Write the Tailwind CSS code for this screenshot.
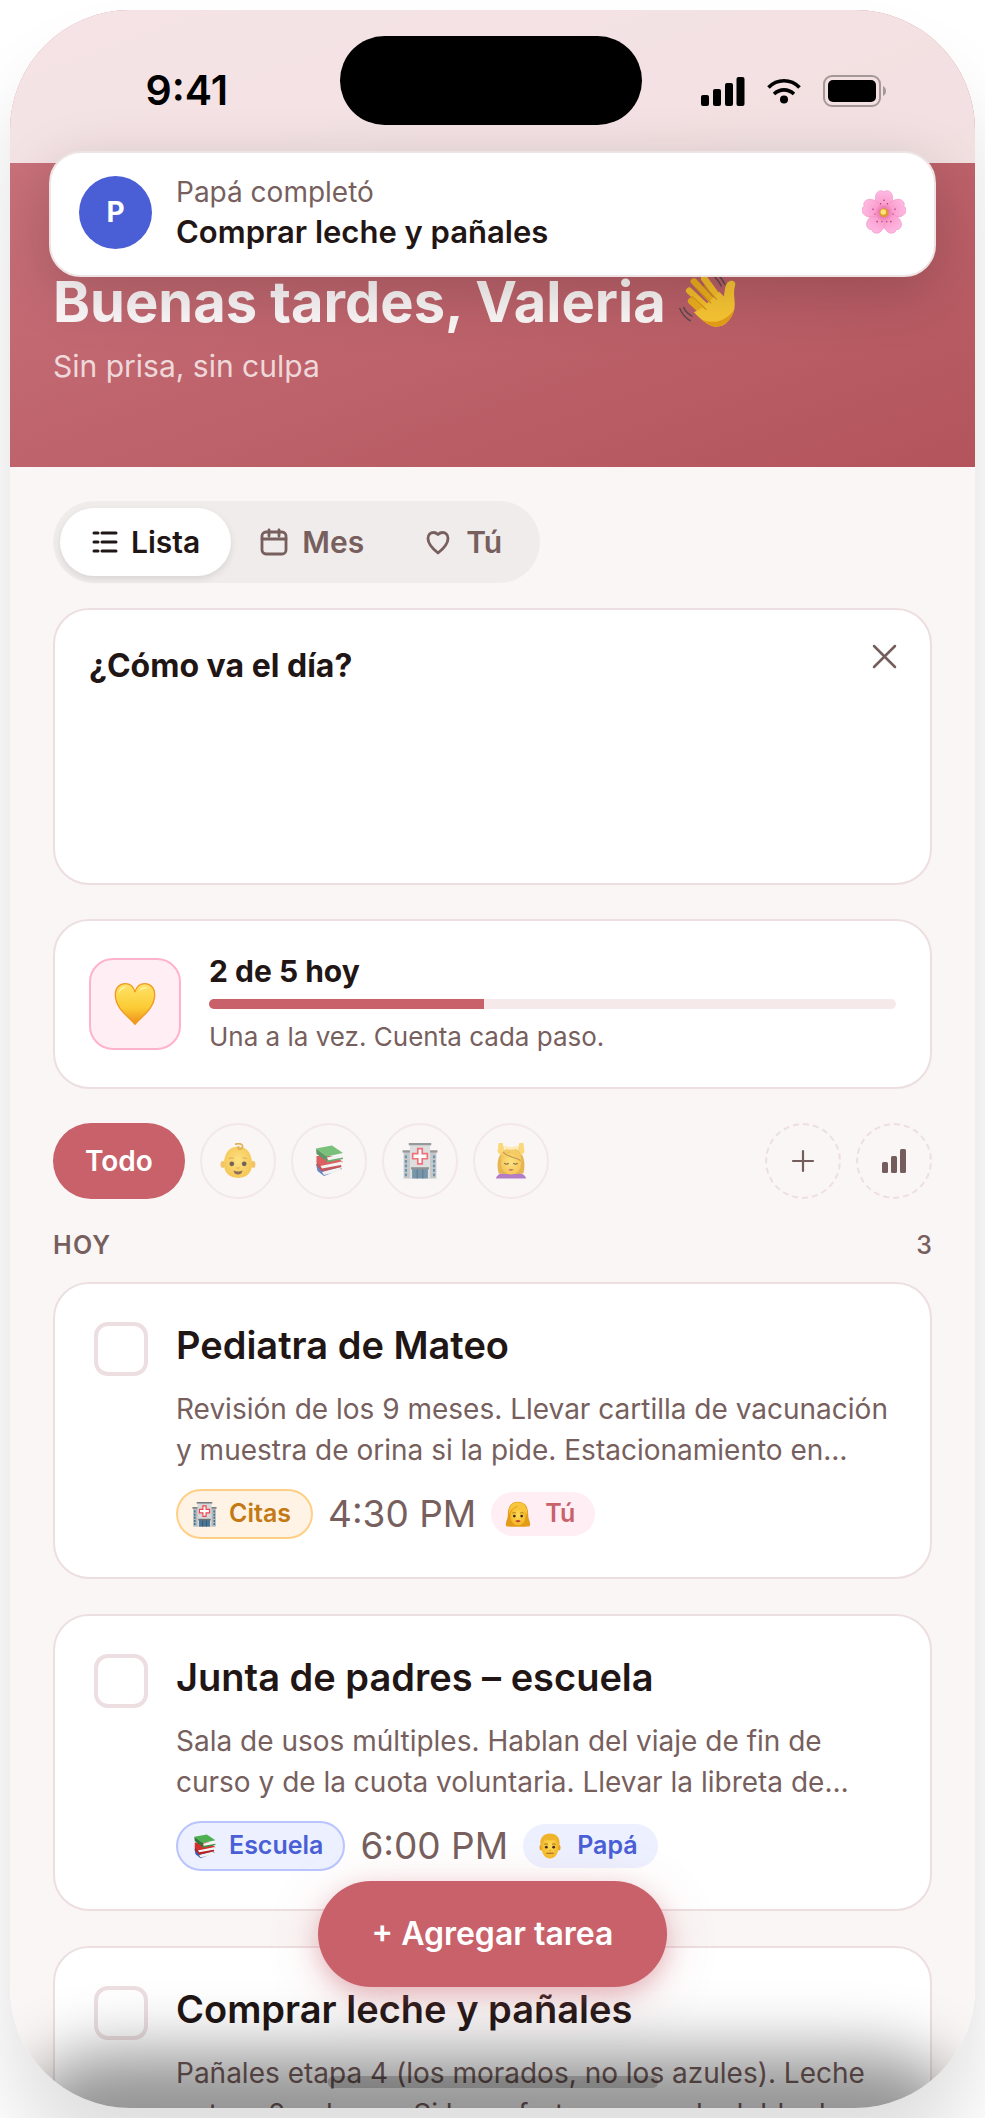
<!DOCTYPE html>
<html lang="es">
<head>
    <meta charset="UTF-8">
    <meta name="viewport" content="width=device-width, initial-scale=1.0">
    <title>Tareas de hoy</title>
    <script src="https://cdn.jsdelivr.net/npm/@tailwindcss/browser@4"></script>
</head>
<body class="h-screen overflow-hidden bg-white p-2.5 font-['Inter',sans-serif] text-[#1f1615]">
    <!-- Emojis -->
    <svg class="absolute size-0" aria-hidden="true">
        <defs>
            <linearGradient id="gold" x1="0" y1="0" x2="0" y2="1">
                <stop offset="0" stop-color="#ffe36a"/>
                <stop offset=".6" stop-color="#fbcb33"/>
                <stop offset="1" stop-color="#ee8d1c"/>
            </linearGradient>
            <radialGradient id="skin" cx=".5" cy=".45" r=".6">
                <stop offset="0" stop-color="#ffdc5a"/>
                <stop offset="1" stop-color="#f3b41f"/>
            </radialGradient>
            <radialGradient id="petalo" gradientUnits="userSpaceOnUse" cx="32" cy="32" r="31">
                <stop offset="0" stop-color="#e0569b"/>
                <stop offset=".4" stop-color="#fa9fce"/>
                <stop offset="1" stop-color="#ffb9e4"/>
            </radialGradient>
        </defs>
        <symbol id="flor" viewBox="0 0 64 64">
            <g fill="url(#petalo)" stroke="#ee8fc0" stroke-width=".8">
                <path d="M32 32C22 25 16 14 21 5C24 0 30 0 32 3C34 0 40 0 43 5C48 14 42 25 32 32Z"/>
                <path transform="rotate(72 32 33)" d="M32 32C22 25 16 14 21 5C24 0 30 0 32 3C34 0 40 0 43 5C48 14 42 25 32 32Z"/>
                <path transform="rotate(144 32 33)" d="M32 32C22 25 16 14 21 5C24 0 30 0 32 3C34 0 40 0 43 5C48 14 42 25 32 32Z"/>
                <path transform="rotate(216 32 33)" d="M32 32C22 25 16 14 21 5C24 0 30 0 32 3C34 0 40 0 43 5C48 14 42 25 32 32Z"/>
                <path transform="rotate(288 32 33)" d="M32 32C22 25 16 14 21 5C24 0 30 0 32 3C34 0 40 0 43 5C48 14 42 25 32 32Z"/>
            </g>
            <g fill="#a8336c">
                <circle cx="32" cy="15" r="1.1"/><circle cx="27" cy="20" r="1"/><circle cx="37" cy="20" r="1"/>
                <circle cx="48" cy="28" r="1.1"/><circle cx="45" cy="35" r="1"/><circle cx="16" cy="28" r="1.1"/>
                <circle cx="19" cy="35" r="1"/><circle cx="22" cy="46" r="1.1"/><circle cx="42" cy="46" r="1.1"/>
                <circle cx="29" cy="46" r="1"/><circle cx="36" cy="46" r="1"/>
            </g>
            <circle cx="32" cy="33" r="6.5" fill="#dd9d2c"/>
            <circle cx="31" cy="32" r="4" fill="#ffe27a"/>
        </symbol>
        <symbol id="mano" viewBox="0 0 64 64">
            <g stroke-linecap="round" fill="none">
                <path d="M14 31L32 48" stroke="#eeb01d" stroke-width="7"/>
                <path d="M12 20L35 42" stroke="#f7c02a" stroke-width="7"/>
                <path d="M17 10L40 35" stroke="#eeb01d" stroke-width="7"/>
                <path d="M28 7L45 30" stroke="#f7c02a" stroke-width="7"/>
            </g>
            <path d="M26 38L44 21L49 26C50 20 50 15 53 11C56 8 62 9 61 14C58 23 62 32 60 40C57 52 48 60 38 58C30 56 24 50 17 43Z" fill="#f9c633"/>
            <path d="M60 40C57 52 48 60 38 58C33 57 29 54 24 50C38 57 52 52 60 40Z" fill="#e59e18"/>
            <g stroke="#d99516" stroke-width="1.2" fill="none" stroke-linecap="round">
                <path d="M15 26L30 40M19 17L35 33M28 15L41 29"/>
            </g>
            <g stroke="#5c4b4e" stroke-width="1.6" fill="none" stroke-linecap="round">
                <path d="M2 39C4 44 8 49 13 52M6 38C8 42 11 45 15 47M37 3C41 7 44 10 46 15M42 2C46 6 48 9 50 13"/>
            </g>
        </symbol>
        <symbol id="corazon" viewBox="0 0 64 64">
            <path d="M32 63C24 52 2 40 2 18C2 7 9 1 17 1C24 1 30 6 32 14C34 6 40 1 47 1C55 1 62 7 62 18C62 40 40 52 32 63Z" fill="url(#gold)" stroke="#f0991f" stroke-width="2"/>
            <path d="M7 16C8 8 14 5 19 6C14 8 10 10 7 16ZM38 13C41 7 47 5 52 8C46 8 42 9 38 13Z" fill="#fff3b4"/>
        </symbol>
        <symbol id="bebe" viewBox="0 0 64 64">
            <ellipse cx="5" cy="38" rx="4" ry="6" fill="#f0b43a"/>
            <ellipse cx="59" cy="38" rx="4" ry="6" fill="#f0b43a"/>
            <path d="M32 6C50 6 57 22 57 37C57 53 47 62 32 62C17 62 7 53 7 37C7 22 14 6 32 6Z" fill="url(#skin)"/>
            <path d="M28 2C36 -1 43 4 39 9C36 13 30 10 33 7" fill="none" stroke="#d79a22" stroke-width="3" stroke-linecap="round"/>
            <circle cx="21" cy="37" r="4.2" fill="#46332b"/><circle cx="43" cy="37" r="4.2" fill="#46332b"/>
            <path d="M16 28Q20 25 24 27M40 27Q44 25 48 28" stroke="#c08a26" stroke-width="1.6" fill="none"/>
            <path d="M24 49Q32 52 40 49Q39 56 32 56Q25 56 24 49Z" fill="#6b4423"/>
            <path d="M29 44Q32 46 35 44" stroke="#cf951d" stroke-width="1.6" fill="none"/>
        </symbol>
        <symbol id="libros" viewBox="0 0 64 64">
            <path d="M6 38L44 36L58 48L22 62L9 52Z" fill="#3560b8"/>
            <path d="M18 54L55 44L56 52L22 60Z" fill="#f1f1ef"/>
            <path d="M7 22L44 22L60 34L18 46L7 34Z" fill="#d22f31"/>
            <path d="M15 42L58 33L57 40L19 50Z" fill="#f4f4f2"/>
            <path d="M7 32L18 47L56 40L57 44L18 53L8 42Z" fill="#b92024"/>
            <path d="M6 7L38 1L60 16L28 23Z" fill="#4fb052"/>
            <path d="M6 7L28 23L28 33L7 18Z" fill="#2c7a37"/>
            <path d="M28 25L60 17L58 26L31 32Z" fill="#f4f4f2"/>
            <path d="M28 31L60 25L60 28L28 35Z" fill="#3c9545"/>
        </symbol>
        <symbol id="hospital" viewBox="0 0 64 64">
            <path d="M3 16H61V63H3Z" fill="#b3b9bb"/>
            <path d="M1 13H63V17H1Z" fill="#74797c"/>
            <path d="M14 3H50V63H14Z" fill="#d5d7d8"/>
            <path d="M12 0H52V4H12Z" fill="#777c80"/>
            <path d="M28 10H36V19H45V28H36V37H28V28H19V19H28Z" fill="#fff" stroke="#ec4650" stroke-width="3"/>
            <path d="M18 45H46V63H18Z" fill="#4a7593"/>
            <path d="M16 43H48V47H16Z" fill="#6c7376"/>
            <path d="M27 47V63M37 47V63" stroke="#2a4a61" stroke-width="1.5"/>
            <path d="M7 22V60M57 22V60" stroke="#3f7297" stroke-width="4" stroke-dasharray="5 3"/>
        </symbol>
        <symbol id="masaje" viewBox="0 0 64 64">
            <path d="M5 63C8 54 18 52 32 52C46 52 56 54 59 63Z" fill="#9a55b5"/>
            <path d="M10 54C5 36 9 10 32 9C55 10 59 36 54 54L42 55H22Z" fill="#e0a01c"/>
            <ellipse cx="32" cy="36" rx="18" ry="20" fill="url(#skin)"/>
            <path d="M13 32C16 22 25 17 29 15C36 21 46 25 51 33C50 16 42 9 32 9C22 9 14 16 13 32Z" fill="#f2bd36"/>
            <path d="M10 0H17L20 11L14 22L8 16ZM54 0H47L44 11L50 22L56 16Z" fill="#fbcf4e"/>
            <path d="M18 16C25 25 40 25 49 31" fill="none" stroke="#a97a1c" stroke-width="2"/>
            <path d="M20 36Q24 39 28 36M36 36Q40 39 44 36" stroke="#6a491c" stroke-width="2" fill="none"/>
            <path d="M27 47Q32 45 37 47Q32 52 27 47Z" fill="#b0483a"/>
            <path d="M20 7Q32 12 44 7" stroke="#ffe7a1" stroke-width="5" fill="none"/>
        </symbol>
        <symbol id="mujer" viewBox="0 0 64 64">
            <path d="M3 62C0 50 7 48 7 32C7 12 17 2 32 2C49 2 57 14 57 32C57 48 64 50 61 62C48 64 16 64 3 62Z" fill="#e39c17"/>
            <ellipse cx="32" cy="37" rx="19" ry="23" fill="url(#skin)"/>
            <path d="M10 34C13 18 24 16 28 12C34 20 50 22 54 35C57 14 46 3 32 3C17 3 8 14 10 34Z" fill="#f7c63e"/>
            <circle cx="23" cy="37" r="3.4" fill="#3e2b23"/><circle cx="41" cy="37" r="3.4" fill="#3e2b23"/>
            <path d="M18 30Q23 27 27 30M37 30Q41 27 46 30" stroke="#a0701a" stroke-width="2" fill="none"/>
            <path d="M25 49Q32 45 39 49Q32 56 25 49Z" fill="#bf4739"/>
        </symbol>
        <symbol id="hombre" viewBox="0 0 64 64">
            <ellipse cx="10" cy="36" rx="4" ry="7" fill="#e8a11f"/>
            <ellipse cx="54" cy="36" rx="4" ry="7" fill="#e8a11f"/>
            <path d="M32 5C48 5 53 18 53 34C53 50 45 63 32 63C19 63 11 50 11 34C11 18 16 5 32 5Z" fill="url(#skin)"/>
            <path d="M9 31C5 10 18 1 32 1C46 1 59 10 55 31L50 28C49 20 47 17 44 16C36 19 27 18 20 16C16 18 15 22 14 28Z" fill="#efb42c"/>
            <circle cx="23" cy="35" r="3.4" fill="#3e2b23"/><circle cx="41" cy="35" r="3.4" fill="#3e2b23"/>
            <path d="M18 28Q23 25 27 28M37 28Q41 25 46 28" stroke="#a0701a" stroke-width="2.4" fill="none"/>
            <path d="M24 50H40" stroke="#9a5b22" stroke-width="2.6" stroke-linecap="round"/>
            <path d="M30 43Q32 45 34 43" stroke="#c98a1a" stroke-width="2" fill="none"/>
        </symbol>
    </svg>

    <div class="relative h-full overflow-hidden rounded-[120px] bg-[#faf6f5]">
        <header class="bg-linear-160 from-[#cd7781] to-[#b3545c] px-[43px] pt-[260px] pb-[81px]">
            <h1 class="flex items-center gap-3 text-[56px] leading-[64px] font-bold text-white/95">
                Buenas tardes, Valeria
                <svg class="size-[60px]" role="img" aria-label="Mano saludando"><use href="#mano"/></svg>
            </h1>
            <p class="mt-3 text-[30px] leading-10 text-white/75">Sin prisa, sin culpa</p>
        </header>

        <main class="px-[43px] pt-[34px]">
            <nav class="flex w-fit rounded-[41px] bg-[#f0eceb] p-[7px] text-[30px] font-semibold text-[#775f5e]">
                <button class="flex h-[68px] items-center gap-3 rounded-full bg-white px-[31px] text-[#1f1615] shadow-[0_3px_7px_rgb(0_0_0/0.1)]">
                    <svg class="size-7" viewBox="0 0 28 28" fill="none" stroke="currentColor" stroke-width="3" stroke-linecap="round"><path d="M3 5H7M11 5H25M3 14H7M11 14H25M3 23H7M11 23H25"/></svg>
                    Lista
                </button>
                <button class="flex h-[68px] items-center gap-3.5 rounded-full px-[29px]">
                    <svg class="size-7" viewBox="0 0 28 28" fill="none" stroke="currentColor" stroke-width="2.8" stroke-linecap="round"><rect x="2" y="4" width="24" height="22" rx="4"/><path d="M2 11H26M9 2V8M19 2V8"/></svg>
                    Mes
                </button>
                <button class="flex h-[68px] items-center gap-3.5 rounded-full px-[31px]">
                    <svg class="size-7" viewBox="0 0 28 28" fill="none" stroke="currentColor" stroke-width="2.8" stroke-linejoin="round"><path d="M14 25C9 21 4 16.500 4 10.500C4 6.500 6.500 4.500 9.500 4.500C11.500 4.500 13 5.500 14 6.500C15 5.500 16.500 4.500 18.500 4.500C21.500 4.500 24 6.500 24 10.500C24 16.500 19 21 14 25Z"/></svg>
                    Tú
                </button>
            </nav>

            <section class="mt-[25px] flex min-h-[277px] items-start justify-between rounded-[36px] border-2 border-[#eddfe1] bg-white px-8 py-8">
                <h2 class="pt-1 pl-0.5 text-[32px] leading-10 font-bold">¿Cómo va el día?</h2>
                <button aria-label="Cerrar" class="text-[#745d5c]">
                    <svg class="size-7" viewBox="0 0 28 28" fill="none" stroke="currentColor" stroke-width="2.5" stroke-linecap="round"><path d="M4 4L25 25M25 4L4 25"/></svg>
                </button>
            </section>

            <section class="mt-[34px] flex min-h-[170px] items-center gap-7 rounded-[36px] border-2 border-[#eddfe1] bg-white px-[34px]">
                <div class="flex size-[92px] shrink-0 items-center justify-center rounded-3xl border-2 border-[#ffb3ca] bg-[#ffeef4]">
                    <svg class="size-[42px]" role="img" aria-label="Corazón amarillo"><use href="#corazon"/></svg>
                </div>
                <div class="grow">
                    <h2 class="text-[30px] leading-10 font-bold">2 de 5 hoy</h2>
                    <div role="progressbar" aria-label="Tareas de hoy" aria-valuenow="2" aria-valuemin="0" aria-valuemax="5" class="mt-2 h-2.5 overflow-hidden rounded-full bg-[#f5e9e9]">
                        <div class="h-full bg-[#c8616a]" style="width: 40%"></div>
                    </div>
                    <p class="mt-2 text-[26px] leading-10 text-[#775f5e]">Una a la vez. Cuenta cada paso.</p>
                </div>
            </section>

            <div class="mt-[34px] flex gap-[15px]">
                <button class="h-[76px] rounded-[38px] bg-[#c8616a] px-8 text-[28px] font-semibold text-white">Todo</button>
                <button aria-label="Bebé" class="flex size-[76px] items-center justify-center rounded-full border-2 border-[#f2e8e8]"><svg class="size-9 opacity-75"><use href="#bebe"/></svg></button>
                <button aria-label="Escuela" class="flex size-[76px] items-center justify-center rounded-full border-2 border-[#f2e8e8]"><svg class="size-8 opacity-75"><use href="#libros"/></svg></button>
                <button aria-label="Citas" class="flex size-[76px] items-center justify-center rounded-full border-2 border-[#f2e8e8]"><svg class="size-9 opacity-75"><use href="#hospital"/></svg></button>
                <button aria-label="Para mí" class="flex size-[76px] items-center justify-center rounded-full border-2 border-[#f2e8e8]"><svg class="size-9 opacity-75"><use href="#masaje"/></svg></button>
                <button aria-label="Nueva categoría" class="ml-auto flex size-[76px] items-center justify-center rounded-full border-2 border-dashed border-[#eddfe1] text-[#745d5c]">
                    <svg class="size-6" viewBox="0 0 24 24" fill="none" stroke="currentColor" stroke-width="2.2" stroke-linecap="round"><path d="M12 2V22M2 12H22"/></svg>
                </button>
                <button aria-label="Estadísticas" class="flex size-[76px] items-center justify-center rounded-full border-2 border-dashed border-[#eddfe1] text-[#745d5c]">
                    <svg class="size-6" viewBox="0 0 24 24" fill="currentColor"><rect x="0" y="13" width="6" height="11" rx="1.5"/><rect x="9" y="7" width="6" height="17" rx="1.5"/><rect x="18" y="0" width="6" height="24" rx="1.5"/></svg>
                </button>
            </div>

            <div class="mt-7 flex justify-between text-[25px] leading-9 font-semibold text-[#775f5e]">
                <h2 class="tracking-wider">HOY</h2>
                <span class="font-medium">3</span>
            </div>

            <ul class="mt-[19px] flex flex-col gap-[35px]">
                <li class="flex gap-7 rounded-[36px] border-2 border-[#eddfe1] bg-white px-[39px] py-[38px]">
                    <input type="checkbox" id="t1" class="size-[54px] shrink-0 appearance-none rounded-[14px] border-4 border-[#eddfe1]">
                    <div class="grow">
                        <label for="t1" class="block pb-1 text-[38px] leading-[46px] font-semibold whitespace-nowrap">Pediatra de Mateo</label>
                        <p class="mt-[17px] text-[28px] leading-[41px] whitespace-nowrap text-[#775f5e]">Revisión de los 9 meses. Llevar cartilla de vacunación<br>y muestra de orina si la pide. Estacionamiento en…</p>
                        <div class="mt-[18px] flex items-center gap-[15px]">
                            <span class="flex h-[50px] items-center gap-3 rounded-full border-2 border-[#ffcf86] bg-[#fff3e6] pr-5 pl-3.5 text-[25px] font-semibold text-[#c47a14]"><svg class="size-[25px]"><use href="#hospital"/></svg>Citas</span>
                            <time class="text-[37px] leading-[50px] text-[#775f5e]">4:30 PM</time>
                            <span class="flex h-11 items-center gap-3.5 rounded-full bg-[#ffeef4] pr-5 pl-3.5 text-[25px] font-semibold text-[#c8616a]"><svg class="size-[26px]"><use href="#mujer"/></svg>Tú</span>
                        </div>
                    </div>
                </li>
                <li class="flex gap-7 rounded-[36px] border-2 border-[#eddfe1] bg-white px-[39px] py-[38px]">
                    <input type="checkbox" id="t2" class="size-[54px] shrink-0 appearance-none rounded-[14px] border-4 border-[#eddfe1]">
                    <div class="grow">
                        <label for="t2" class="block pb-1 text-[38px] leading-[46px] font-semibold whitespace-nowrap">Junta de padres – escuela</label>
                        <p class="mt-[17px] text-[28px] leading-[41px] whitespace-nowrap text-[#775f5e]">Sala de usos múltiples. Hablan del viaje de fin de<br>curso y de la cuota voluntaria. Llevar la libreta de…</p>
                        <div class="mt-[18px] flex items-center gap-[15px]">
                            <span class="flex h-[50px] items-center gap-3 rounded-full border-2 border-[#b9c4ff] bg-[#edf1ff] pr-5 pl-3.5 text-[25px] font-semibold text-[#4a5fd6]"><svg class="size-[25px]"><use href="#libros"/></svg>Escuela</span>
                            <time class="text-[37px] leading-[50px] text-[#775f5e]">6:00 PM</time>
                            <span class="flex h-11 items-center gap-3.5 rounded-full bg-[#edf1ff] pr-5 pl-3.5 text-[25px] font-semibold text-[#4a5fd6]"><svg class="size-[26px]"><use href="#hombre"/></svg>Papá</span>
                        </div>
                    </div>
                </li>
                <li class="flex gap-7 rounded-[36px] border-2 border-[#eddfe1] bg-white px-[39px] py-[38px]">
                    <input type="checkbox" id="t3" class="size-[54px] shrink-0 appearance-none rounded-[14px] border-4 border-[#eddfe1]">
                    <div class="grow">
                        <label for="t3" class="block pb-1 text-[38px] leading-[46px] font-semibold whitespace-nowrap">Comprar leche y pañales</label>
                        <p class="mt-[17px] text-[28px] leading-[41px] whitespace-nowrap text-[#775f5e]">Pañales etapa 4 (los morados, no los azules). Leche<br>entera 2 galones. Si hay oferta, agrega la doble de…</p>
                    </div>
                </li>
            </ul>
        </main>

        <!-- Sombra inferior -->
        <div class="pointer-events-none absolute inset-x-[60px] top-full h-20 rounded-[40px] shadow-[0_0_64px_56px_rgb(0_0_0/0.42)]"></div>

        <button class="absolute bottom-[121px] left-1/2 h-[106px] -translate-x-1/2 rounded-full bg-[#c8616a] px-[54px] text-[32px] font-semibold whitespace-nowrap text-white shadow-[0_10px_50px_rgb(200_97_106/0.25),0_8px_20px_rgb(200_97_106/0.3)]">+ Agregar tarea</button>
        <div class="absolute bottom-5 left-1/2 h-3 w-[331px] -translate-x-1/2 rounded-full bg-black/20"></div>

        <!-- Barra de estado -->
        <div class="absolute inset-x-0 top-0 flex h-[153px] items-start bg-white/80 pt-[26px] text-black">
            <div class="flex h-[110px] flex-1 items-center justify-center pl-6 text-[41px] font-semibold">9:41</div>
            <div class="h-[89px] w-[302px] rounded-full bg-black"></div>
            <div class="flex h-[110px] flex-1 items-center justify-center gap-[22px] pr-7">
                <svg class="h-[30px] w-[44px]" viewBox="0 0 44 30" fill="currentColor"><rect x="0" y="19" width="8" height="11" rx="2"/><rect x="12" y="13" width="8" height="17" rx="2"/><rect x="24" y="7" width="8" height="23" rx="2"/><rect x="35.5" y="1" width="8" height="29" rx="2"/></svg>
                <svg class="h-[26px] w-[34px]" viewBox="0 0 34 26" fill="none" stroke="currentColor" stroke-width="3.6"><path d="M1.500 9.500C10 .5 24 .5 32.500 9.500M7 16C13 10.500 21 10.500 27 16"/><circle cx="17" cy="21.500" r="4" fill="currentColor" stroke="none"/></svg>
                <svg class="h-[32px] w-[65px]" viewBox="0 0 65 32"><rect x="1" y="1" width="56" height="30" rx="8" fill="none" stroke="#a49797" stroke-width="2"/><rect x="5" y="5" width="48" height="22" rx="5"/><path d="M60 11C64 13 64 19 60 21Z" fill="#a49797"/></svg>
            </div>
        </div>

        <!-- Notificación -->
        <div role="status" class="absolute inset-x-[39px] top-[141px] flex h-[126px] items-center gap-6 rounded-[32px] border-2 border-[#eee4e4] bg-white px-7 pb-1 shadow-[0_16px_60px_rgb(0_0_0/0.18)]">
            <div class="flex size-[73px] items-center justify-center rounded-full bg-[#4a5fd6] text-[28px] font-bold text-white">P</div>
            <div class="grow leading-[39px]">
                <p class="text-[28px] text-[#775f5e]">Papá completó</p>
                <p class="text-[31px] font-semibold">Comprar leche y pañales</p>
            </div>
            <svg class="size-[44px]" role="img" aria-label="Flor"><use href="#flor"/></svg>
        </div>
    </div>
    <div class="pointer-events-none absolute inset-2.5 -z-10 rounded-[120px] shadow-[0_60px_80px_rgb(0_0_0/0.13)]"></div>
</body>
</html>
